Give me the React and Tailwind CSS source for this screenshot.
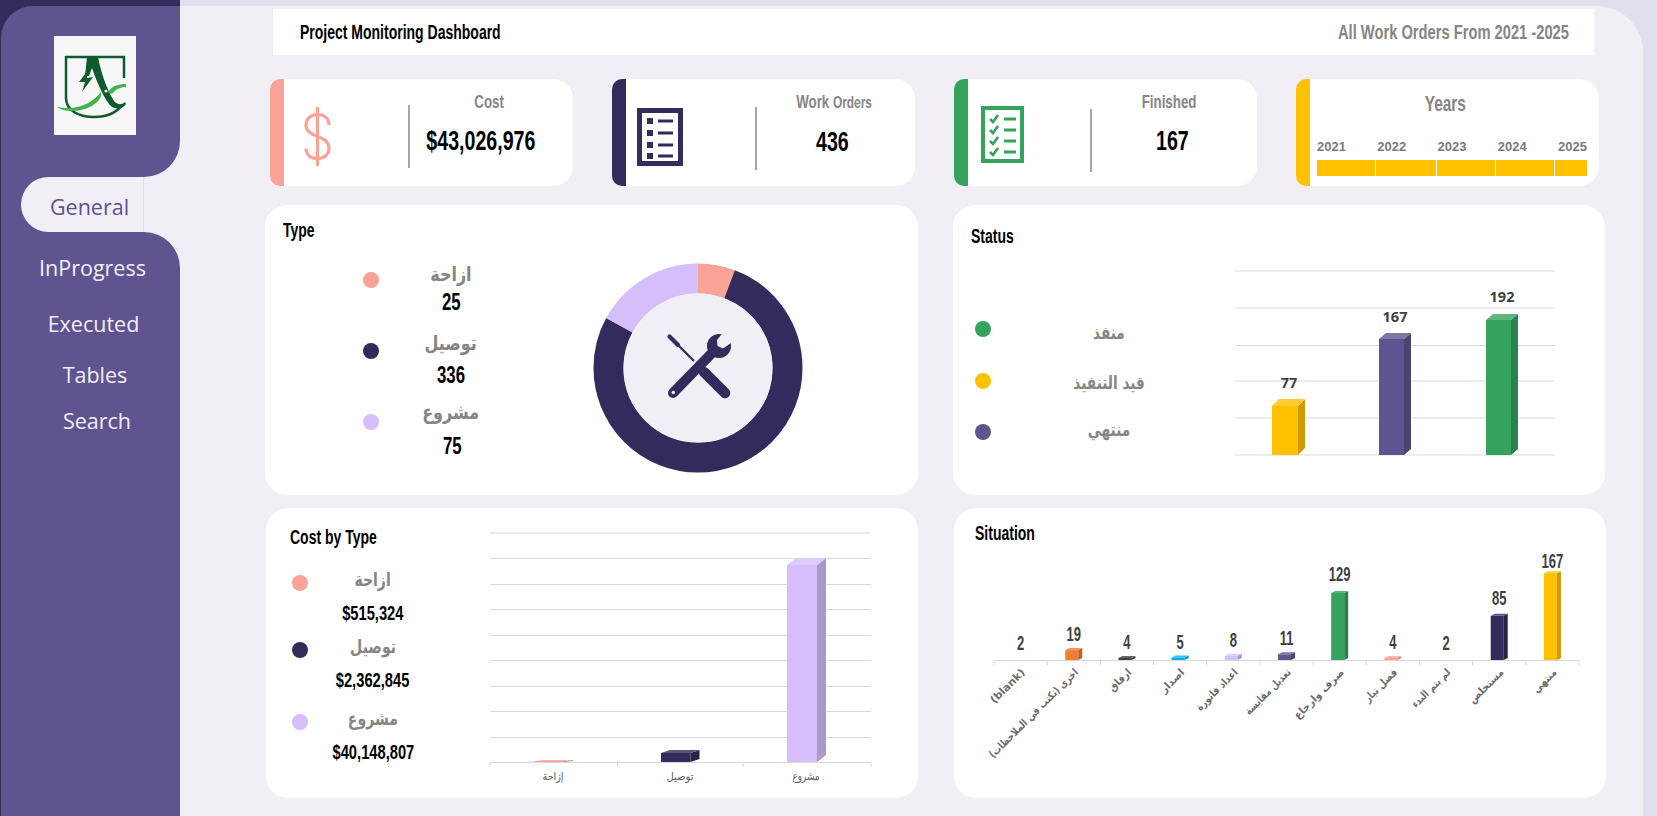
const cond = "[font-family:'Liberation_Sans',sans-serif] font-bold inline-block scale-x-[0.7] whitespace-nowrap";
const arabic = "[font-family:'DejaVu_Sans',sans-serif] font-bold text-[#858585] inline-block whitespace-nowrap";

function Logo() {
  return (
    <div className="w-[82px] h-[99px] bg-[#f7f7f7] ml-[53px]">
      <svg viewBox="0 0 82 99" className="w-full h-full">
        <path d="M70 42V21H12V62C12 74 24 81 40 81C54 81 63 76 68 69" fill="none" stroke="#0f5a2e" strokeWidth="2.500" />
        <path d="M33 21H44C47 36 52 52 60 65C63 69 68 69 71 66L72 68C68 74 60 74 55 68C48 58 43 46 38 32L35 40L31 40Z" fill="#0f5a2e" />
        <path d="M34 34L25 46L31 46L28 56L39 41L33 42Z" fill="#0f5a2e" />
        <path d="M3 71C22 75 38 68 47 56C49 62 41 71 27 74C17 76 8 75 3 71Z" fill="#3db54a" />
        <path d="M54 56C58 50 64 48 72 48L72 51C66 51 62 53 58 58Z" fill="#3db54a" />
        <circle cx="52" cy="55" r="1.500" fill="#f7f7f7" />
      </svg>
    </div>
  );
}

const navItems = [
  { label: "InProgress", cls: "mt-[20px] pl-[4px]" },
  { label: "Executed", cls: "mt-[26px] pl-[6px]" },
  { label: "Tables", cls: "mt-[21px] pl-[9px]" },
  { label: "Search", cls: "mt-[16px] pl-[13px]" },
];

function Sidebar() {
  return (
    <aside className="w-[180px] shrink-0 flex flex-col bg-[#322b5b] border-l border-[#322b5b] pt-[6px] [font-family:'Open_Sans',sans-serif]">
      <div className="bg-[linear-gradient(to_right,#322b5b_50%,#f1eff5_50%)]">
        <div className="h-[171px] pt-[30px] bg-[#5f5490] rounded-tl-[32px] rounded-br-[36px]">
          <Logo />
        </div>
      </div>
      <div className="h-[55px] flex pl-[20px] bg-[linear-gradient(to_right,#5f5490_50%,#f1eff5_50%)]">
        <div className="w-[123px] rounded-l-full bg-[#f1eff5] border-r border-[#e2deee] flex items-center justify-center pl-[15px] pt-[5px] text-[21.5px] text-[#5b4f92]">
          General
        </div>
      </div>
      <div className="flex-1 bg-[#f1eff5]">
        <nav className="h-full bg-[#5f5490] rounded-tr-[36px] overflow-hidden pt-px">
          {navItems.map((item) => (
            <div key={item.label} className={`${item.cls} h-[30px] flex items-center justify-center text-[21.5px] text-[#f1eff5]`}>
              {item.label}
            </div>
          ))}
        </nav>
      </div>
    </aside>
  );
}

function DollarIcon() {
  return (
    <svg viewBox="0 0 27 59" className="w-[27px] h-[59px]" fill="none" stroke="#f9a396" strokeWidth="3.200">
      <path d="M25 18C25 11 20 7.500 13.500 7.500C6.500 7.500 2 12 2 18C2 25 8 27 13.500 29.500C20 32 25 34.500 25 41.500C25 47.500 20 51.500 13.500 51.500C7 51.500 2 48 2 41.500M13.500 0V59" />
    </svg>
  );
}

function ListIcon() {
  const rows = [13, 25, 37, 48];
  return (
    <svg viewBox="0 0 46 58" className="w-[46px] h-[58px]">
      <rect x="2.500" y="2.500" width="41" height="53" fill="none" stroke="#322b5b" strokeWidth="5" />
      {rows.map((y) => (
        <g key={y} fill="#322b5b">
          <rect x="10" y={y - 3} width="6" height="6" />
          <rect x="21" y={y - 1.500} width="15" height="3" />
        </g>
      ))}
    </svg>
  );
}

function CheckIcon() {
  const rows = [13, 24, 35, 46];
  return (
    <svg viewBox="0 0 43 57" className="w-[43px] h-[57px]">
      <rect x="2" y="2" width="39" height="53" fill="none" stroke="#34a35c" strokeWidth="4" />
      {rows.map((y) => (
        <g key={y}>
          <path d={`M9 ${y}L12 ${y + 3}L17 ${y - 4}`} fill="none" stroke="#34a35c" strokeWidth="2.600" />
          <rect x="23" y={y - 1.500} width="12" height="3" fill="#34a35c" />
        </g>
      ))}
    </svg>
  );
}

function KpiCard({ accent, icon, iconCls, dividerCls, label, labelCls, value, valueCls }) {
  return (
    <div className="h-[107px] bg-white rounded-l-[10px] rounded-r-[20px] flex overflow-hidden">
      <div className={`w-[14px] shrink-0 ${accent}`} />
      <div className={`shrink-0 ${iconCls}`}>{icon}</div>
      <div className={`w-[2px] h-[63px] shrink-0 bg-[#a6a6a6] ${dividerCls}`} />
      <div className="flex-1 min-w-0 flex flex-col items-center">
        <div className={`mt-[11px] leading-[24px] ${labelCls}`}>
          <span className={`${cond} text-[19px] text-[#858585]`}>{label}</span>
        </div>
        <div className={`mt-[12px] leading-[30px] ${valueCls}`}>
          <span className={`${cond} text-[28px] text-black`}>{value}</span>
        </div>
      </div>
    </div>
  );
}

function YearsCard() {
  const years = ["2021", "2022", "2023", "2024", "2025"];
  return (
    <div className="h-[107px] bg-white rounded-l-[10px] rounded-r-[20px] flex overflow-hidden">
      <div className="w-[14px] shrink-0 bg-[#ffc000]" />
      <div className="flex-1 pl-[7px] pr-[12px]">
        <div className="text-center mt-[13px] pr-[13px] leading-[24px]">
          <span className={`${cond} text-[22px] text-[#858585]`}>Years</span>
        </div>
        <div className="flex justify-between mt-[21px] text-[13px] leading-[18px] text-[#7a7a7a] [font-family:'Liberation_Sans',sans-serif] font-bold">
          {years.map((y) => <span key={y}>{y}</span>)}
        </div>
        <div className="grid grid-cols-[58px_60px_58px_58px_32px] gap-px mt-[4px] h-[16px] w-[270px] bg-white">
          {years.map((y) => <div key={y} className="bg-[#ffc000]" />)}
        </div>
      </div>
    </div>
  );
}

function Title({ children, cls }) {
  return (
    <div className={`leading-[24px] ${cls}`}>
      <span className={`${cond} origin-left text-[20px] text-black`}>{children}</span>
    </div>
  );
}

function Donut() {
  const cx = 698;
  const cy = 368;
  const r = 89.500;
  const c = 2 * Math.PI * r;
  const total = 436;
  const slices = [
    { v: 25, color: "#f9a396" },
    { v: 336, color: "#322b5b" },
    { v: 75, color: "#d4bffb" },
  ];
  let acc = 0;
  return (
    <svg viewBox="590 260 216 216" className="w-[216px] h-[216px] mt-[55px]">
      <g transform={`rotate(-90 ${cx} ${cy})`} fill="none" strokeWidth="30">
        {slices.map((s) => {
          const len = (s.v / total) * c;
          const el = <circle key={s.color} cx={cx} cy={cy} r={r} stroke={s.color} strokeDasharray={`${len} ${c - len}`} strokeDashoffset={-acc} />;
          acc += len;
          return el;
        })}
      </g>
      <circle cx={cx} cy={cy} r="74.500" fill="#f1eff5" />
      <g transform="translate(667 335)">
        <path d="M2.500 1.500L11 10" stroke="#322b5b" strokeWidth="4.200" strokeLinecap="round" fill="none" />
        <path d="M9 8L27 26" stroke="#322b5b" strokeWidth="2.300" fill="none" />
        <path d="M37 37L58 58" stroke="#322b5b" strokeWidth="10.500" strokeLinecap="round" fill="none" />
        <path d="M6 58L44 19" stroke="#322b5b" strokeWidth="10" strokeLinecap="round" fill="none" />
        <path d="M36 44L44 36" stroke="#f1eff5" strokeWidth="0" fill="none" />
        <circle cx="52" cy="11" r="12" fill="#322b5b" />
        <path d="M55.700 -2L50 5L50.500 11L56 13.500L64 8L72 -2Z" fill="#f1eff5" />
        <circle cx="6.300" cy="57.500" r="1.800" fill="#f1eff5" />
      </g>
    </svg>
  );
}

const palette = {
  yellow: ["#ffc000", "#cc9a00", "#ffcd33"],
  purple: ["#5f5490", "#4c4373", "#7f76a6"],
  green: ["#34a35c", "#2a824a", "#5db57d"],
  lilac: ["#d4bffb", "#aa99c9", "#dccbfc"],
  dark: ["#322b5b", "#282249", "#5b5578"],
  salmon: ["#f9a396", "#c7827a", "#fab5ab"],
  orange: ["#ed7d31", "#be6427", "#f19759"],
  blue: ["#00b0f0", "#008dc0", "#33c0f3"],
  gray: ["#404040", "#333333", "#666666"],
};

function Bar3D({ x, w, d, cap, top, base, color }) {
  const [front, side, lid] = palette[color];
  return (
    <g>
      <rect x={x} y={top} width={w} height={base - top} fill={front} />
      <polygon points={`${x + w},${top} ${x + w + d},${top - cap} ${x + w + d},${base - cap} ${x + w},${base}`} fill={side} />
      <polygon points={`${x},${top} ${x + d},${top - cap} ${x + w + d},${top - cap} ${x + w},${top}`} fill={lid} />
    </g>
  );
}

function StatusChart() {
  const lines = [271, 308, 345.500, 381, 418, 455];
  const labels = [
    { t: "77", x: 1289, y: 388 },
    { t: "167", x: 1395, y: 322 },
    { t: "192", x: 1502, y: 302 },
  ];
  return (
    <svg viewBox="1230 260 330 200" className="w-[330px] h-[200px] mt-[55px]">
      {lines.map((y) => <line key={y} x1="1235" x2="1555" y1={y} y2={y} stroke="#d9d9d9" strokeWidth="1.200" />)}
      <Bar3D x={1272} w={26} d={7} cap={7} top={406} base={455} color="yellow" />
      <Bar3D x={1379} w={25} d={7} cap={6} top={339} base={455} color="purple" />
      <Bar3D x={1486} w={25} d={7} cap={6} top={320} base={455} color="green" />
      {labels.map((l) => (
        <text key={l.t} x={l.x} y={l.y} textAnchor="middle" fontSize="14.500" fontWeight="700" fill="#404040" fontFamily="'Open Sans',sans-serif">{l.t}</text>
      ))}
    </svg>
  );
}

function CostChart() {
  const lines = [533, 558.500, 584.500, 609.500, 635.500, 660.500, 686.500, 711.500, 737.500];
  const ticks = [490, 617.500, 743, 871];
  const labels = [
    { t: "إزاحة", x: 553 },
    { t: "توصيل", x: 680 },
    { t: "مشروع", x: 806 },
  ];
  return (
    <svg viewBox="485 528 392 256" className="w-[392px] h-[256px] mt-[20px]">
      {lines.map((y) => <line key={y} x1="490" x2="871" y1={y} y2={y} stroke="#d9d9d9" strokeWidth="1.200" />)}
      <line x1="490" x2="871" y1="762.500" y2="762.500" stroke="#d9d9d9" strokeWidth="1.200" />
      {ticks.map((x) => <line key={x} x1={x} x2={x} y1="762" y2="767" stroke="#d9d9d9" strokeWidth="1" />)}
      <Bar3D x={534} w={30} d={9} cap={1} top={761} base={762} color="salmon" />
      <Bar3D x={661} w={29.500} d={9} cap={3} top={753} base={762} color="dark" />
      <Bar3D x={787} w={30} d={9} cap={7} top={565} base={762} color="lilac" />
      {labels.map((l) => (
        <text key={l.t} x={l.x} y={780} textAnchor="middle" fontSize="11" fill="#595959" fontFamily="'DejaVu Sans',sans-serif" textLength={l.t === "إزاحة" ? 21 : 27} lengthAdjust="spacingAndGlyphs">{l.t}</text>
      ))}
    </svg>
  );
}

const situation = [
  { v: 2, label: "(blank)", len: 44, y: 649 },
  { v: 19, label: "اخرى (تكتب في الملاحظات)", len: 121, color: "orange", y: 640 },
  { v: 4, label: "ارفاق", len: 27, color: "gray", y: 648 },
  { v: 5, label: "اصدار", len: 29, color: "blue", y: 648 },
  { v: 8, label: "اعداد فاتورة", len: 54, color: "lilac", y: 646 },
  { v: 11, label: "تعديل مقايسة", len: 60, color: "purple", y: 644 },
  { v: 129, label: "صرف وارجاع", len: 66, color: "green", y: 580 },
  { v: 4, label: "فصل تيار", len: 42, color: "salmon", y: 648 },
  { v: 2, label: "لم يتم البدء", len: 50, y: 649 },
  { v: 85, label: "مستخلص", len: 44, color: "dark", y: 604 },
  { v: 167, label: "منتهي", len: 29, color: "yellow", y: 567 },
];

function SituationChart() {
  const base = 659;
  const step = 585 / 11;
  return (
    <svg viewBox="975 550 615 240" className="w-[615px] h-[240px] ml-[21px] mt-[5px]">
      <line x1="994" x2="1579" y1="659.500" y2="659.500" stroke="#d9d9d9" strokeWidth="1.200" />
      {Array.from({ length: 12 }, (_, i) => (
        <line key={i} x1={994 + i * step} x2={994 + i * step} y1="659" y2="664" stroke="#d9d9d9" strokeWidth="1" />
      ))}
      {situation.map((s, i) => {
        const cx = 994 + step * (i + 0.5);
        const h = Math.max(1, s.v * 0.52);
        return (
          <g key={s.label}>
            {s.color && <Bar3D x={cx - 8.500} w={13} d={4} cap={2} top={base - h} base={base} color={s.color} />}
            <text transform={`translate(${cx} ${s.y}) scale(0.65 1)`} textAnchor="middle" fontSize="20" fontWeight="700" fill="#404040" fontFamily="'Liberation Sans',sans-serif">{s.v}</text>
            <text
              transform={`rotate(-45 ${cx + 5} 672)`}
              x={cx + 5}
              y={672}
              textAnchor="end"
              fontSize="10.500"
              fontWeight="700"
              fill="#6b6b6b"
              fontFamily="'DejaVu Sans',sans-serif"
              textLength={s.len}
              lengthAdjust="spacingAndGlyphs"
            >
              {s.label}
            </text>
          </g>
        );
      })}
    </svg>
  );
}

const typeLegend = [
  { label: "ازاحة", value: "25", dot: "bg-[#f9a396] mt-[11px]", item: "", val: "mt-px" },
  { label: "توصيل", value: "336", dot: "bg-[#322b5b] mt-[13px]", item: "mt-[13px]", val: "mt-[5px]" },
  { label: "مشروع", value: "75", dot: "bg-[#d4bffb] mt-[15px]", item: "mt-[9px]", val: "mt-[7px] pl-[3px]" },
];

const statusLegend = [
  { label: "منفذ", dot: "bg-[#34a35c]", dotCls: "mt-[3px]", row: "" },
  { label: "قيد التنفيذ", dot: "bg-[#ffc000]", dotCls: "mt-[5px]", row: "mt-[20px]" },
  { label: "منتهي", dot: "bg-[#5f5490]", dotCls: "mt-[9px]", row: "mt-[17px]" },
];

const costLegend = [
  { label: "ازاحة", value: "$515,324", dot: "bg-[#f9a396]", item: "" },
  { label: "توصيل", value: "$2,362,845", dot: "bg-[#322b5b]", item: "mt-[6px]" },
  { label: "مشروع", value: "$40,148,807", dot: "bg-[#d4bffb]", item: "mt-[11px]" },
];

export default function App() {
  return (
    <div className="w-[1657px] h-[816px] overflow-hidden flex bg-[#e2deee]">
      <Sidebar />
      <main className="w-[1463px] h-[810px] mt-[6px] bg-[#f1eff5] rounded-tr-[46px]">
        <header className="w-[1321px] h-[46px] mt-[3px] ml-[93px] bg-white flex items-center justify-between pl-[27px] pr-[25px]">
          <span className={`${cond} origin-left text-[20px] text-black`}>Project Monitoring Dashboard</span>
          <span className={`${cond} origin-right text-[21px] text-[#858585]`}>All Work Orders From 2021 -2025</span>
        </header>

        <section className="grid grid-cols-[303px_303px_303px_303px] gap-[39px] ml-[90px] mt-[24px]">
          <KpiCard accent="bg-[#f9a396]" icon={<DollarIcon />} iconCls="w-[124px] pl-[20px] pt-[28px]" dividerCls="mt-[26px]" label="Cost" labelCls="pr-[4px]" value="$43,026,976" valueCls="pr-[22px]" />
          <KpiCard accent="bg-[#322b5b]" icon={<ListIcon />} iconCls="w-[129px] pl-[11px] pt-[29px]" dividerCls="mt-[28px]" label={<>Work <span className="text-[17px]">Orders</span></>} labelCls="pr-[4px]" value="436" valueCls="pr-[8px]" />
          <KpiCard accent="bg-[#34a35c]" icon={<CheckIcon />} iconCls="w-[122px] pl-[13px] pt-[27px]" dividerCls="mt-[30px]" label="Finished" labelCls="pr-[10px]" value="167" valueCls="pr-[4px]" />
          <YearsCard />
        </section>

        <section className="grid grid-cols-[653px_652px] gap-[35px] ml-[85px] mt-[19px]">
          <div className="h-[290px] bg-white rounded-[22px] flex">
            <div className="w-[325px] shrink-0 pt-[13px]">
              <Title cls="pl-[18px]">Type</Title>
              <div className="ml-[98px] mt-[18px]">
                {typeLegend.map((l) => (
                  <div key={l.label} className={`flex gap-[12px] ${l.item}`}>
                    <div className={`w-[16px] h-[16px] rounded-full shrink-0 ${l.dot}`} />
                    <div className="w-[120px] text-center">
                      <div className="leading-[26px]"><span dir="rtl" className={`${arabic} text-[20px] scale-x-[0.8]`}>{l.label}</span></div>
                      <div className={`leading-[26px] ${l.val}`}><span className={`${cond} text-[24px] text-black`}>{l.value}</span></div>
                    </div>
                  </div>
                ))}
              </div>
            </div>
            <Donut />
          </div>

          <div className="h-[290px] bg-white rounded-[22px] flex">
            <div className="w-[277px] shrink-0 pt-[19px]">
              <Title cls="pl-[18px]">Status</Title>
              <div className="ml-[22px] mt-[69px]">
                {statusLegend.map((l) => (
                  <div key={l.label} className={`flex gap-[49px] ${l.row}`}>
                    <div className={`w-[16px] h-[16px] rounded-full shrink-0 ${l.dot} ${l.dotCls}`} />
                    <div className="w-[138px] text-center leading-[30px]"><span dir="rtl" className={`${arabic} text-[18px] scale-x-[0.76]`}>{l.label}</span></div>
                  </div>
                ))}
              </div>
            </div>
            <StatusChart />
          </div>
        </section>

        <section className="grid grid-cols-[652px_652px] gap-[36px] ml-[86px] mt-[13px]">
          <div className="h-[290px] bg-white rounded-[22px] flex">
            <div className="w-[219px] shrink-0 pt-[17px]">
              <Title cls="pl-[24px]">Cost by Type</Title>
              <div className="ml-[26px] mt-[16px]">
                {costLegend.map((l) => (
                  <div key={l.label} className={`flex gap-[15px] ${l.item}`}>
                    <div className={`w-[16px] h-[16px] rounded-full mt-[9px] shrink-0 ${l.dot}`} />
                    <div className="w-[100px] flex flex-col items-center">
                      <div className="leading-[26px]"><span dir="rtl" className={`${arabic} text-[19px] scale-x-[0.74]`}>{l.label}</span></div>
                      <div className="leading-[26px] mt-[7px]"><span className={`${cond} text-[21px] text-black`}>{l.value}</span></div>
                    </div>
                  </div>
                ))}
              </div>
            </div>
            <CostChart />
          </div>

          <div className="h-[290px] bg-white rounded-[22px] pt-[13px]">
            <Title cls="pl-[21px]">Situation</Title>
            <SituationChart />
          </div>
        </section>
      </main>
    </div>
  );
}
